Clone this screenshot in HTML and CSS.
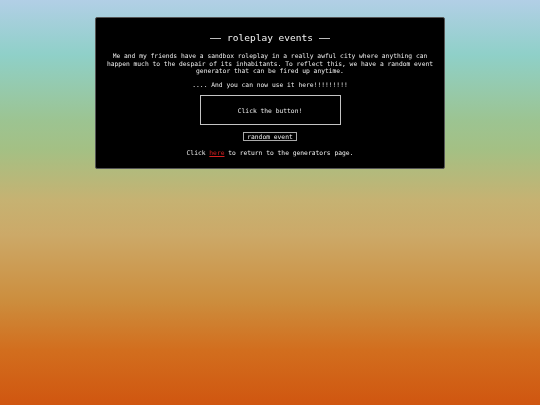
FILE: index.html
```html
<!DOCTYPE html>
<html lang="en">
<head>
    <meta charset="UTF-8">
    <meta name="viewport" content="width=device-width, initial-scale=1.0">
    <title>roleplay events</title>
    <link rel="stylesheet" href="styles.css">
</head>
<body>
    <div class="container">
        <h1 class="title">roleplay events</h1>
        <p class="intro">Me and my friends have a sandbox roleplay in a really awful city where anything can happen much to the despair of its inhabitants. To reflect this, we have a random event generator that can be fired up anytime.</p>
        <p class="intro">.... And you can now use it here!!!!!!!!!</p>
        <div class="output" id="output">Click the button!</div>
        <button class="generate" onclick="generate()">random event</button>
        <p class="footer">Click <a href="#">here</a> to return to the generators page.</p>
    </div>

    <script>
        const events = [
            "A pothole swallows a parked car.",
            "The mayor declares a week of mandatory silence.",
            "All the streetlights turn purple overnight.",
            "A flock of pigeons takes over city hall.",
            "The river starts flowing backwards."
        ];

        function generate() {
            const pick = events[Math.floor(Math.random() * events.length)];
            document.getElementById('output').textContent = pick;
        }
    </script>
</body>
</html>
```

FILE: styles.css
```css
html {
    min-height: 100%;
    background: linear-gradient(to bottom,
        #b2cfe6 0px,
        #8fd0c8 55px,
        #9cc492 120px,
        #a4c084 150px,
        #c6b272 200px,
        #cca968 235px,
        #cc8e3e 300px,
        #d26e1e 350px,
        #d05610 405px);
    background-repeat: no-repeat;
}
body {
    margin: 0;
    padding-top: 17px;
    font-family: "DejaVu Sans Mono", monospace;
    color: #ececec;
}
.container {
    width: 350px;
    margin: 0 auto;
    box-sizing: border-box;
    padding: 13px 10px 11px;
    background-color: #000;
    border: 1px solid #555;
    border-radius: 2px;
    text-align: center;
    will-change: transform;
}
.title {
    display: flex;
    align-items: center;
    justify-content: center;
    gap: 6px;
    margin: 0 0 7px;
    font-size: 9.5px;
    font-weight: normal;
    line-height: 14px;
    color: #f4f4f4;
}
.title::before,
.title::after {
    content: "";
    width: 11px;
    border-top: 1px solid #bbb;
}
.intro {
    margin: 0 0 6px;
    font-size: 6.3px;
    line-height: 7.6px;
}
.output {
    width: 139px;
    height: 28px;
    margin: 7px auto 7px;
    border: 1px solid #c4c4c4;
    display: flex;
    align-items: center;
    justify-content: center;
    font-size: 6.3px;
}
.generate {
    display: block;
    margin: 0 auto;
    font-family: "DejaVu Sans Mono", monospace;
    font-size: 6.3px;
    line-height: 7px;
    padding: 0 3px;
    color: #ececec;
    background-color: #000;
    border: 1px solid #aaa;
    border-radius: 0;
    cursor: pointer;
}
.footer {
    margin: 8px 0 0;
    font-size: 6.3px;
    line-height: 8px;
}
.footer a {
    color: #d82020;
}
```
